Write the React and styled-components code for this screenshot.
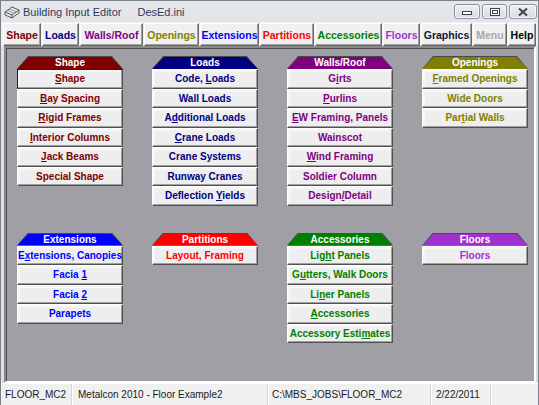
import React from 'react';
import styled, { createGlobalStyle } from 'styled-components';

const GlobalStyle = createGlobalStyle`
  html, body {
    margin: 0;
    padding: 0;
    background: #dfe2e6;
  }
`;

const Window = styled.div`
  width: 539px;
  height: 405px;
  box-sizing: border-box;
  display: flex;
  flex-direction: column;
  background: linear-gradient(#e4e7eb, #dcdfe4 60px);
  border: 1px solid #7d8289;
  border-bottom: none;
  overflow: hidden;
`;

const TitleBar = styled.div`
  height: 21px;
  display: flex;
  align-items: center;
  padding-left: 3px;
  font-family: "Liberation Sans", Arial, sans-serif;
  font-size: 11px;
  color: #2e3d5c;
`;

const TitleText = styled.span`
  margin-left: ${p => p.$gap || 0}px;
`;

const Controls = styled.div`
  margin-left: auto;
  margin-right: 1px;
  display: flex;
  gap: 2px;
  align-self: flex-start;
  margin-top: 3px;
`;

const CtrlButton = styled.div`
  width: ${p => p.$w}px;
  height: 15px;
  box-sizing: border-box;
  border: 1px solid #8e949c;
  border-radius: 3px;
  background: linear-gradient(#eef0f2, #d7dadf);
  box-shadow: inset 0 0 0 1px #f6f7f8;
  display: flex;
  align-items: center;
  justify-content: center;
`;

const TabRow = styled.div`
  height: 24px;
  display: flex;
  gap: 1px;
  padding: 1px 2px 0 2px;
  box-sizing: border-box;
  background: #f0f0f0;
`;

const Tab = styled.div`
  width: ${p => p.$w}px;
  height: 23px;
  box-sizing: border-box;
  border: 1px solid;
  border-color: #ffffff #696969 #696969 #ffffff;
  box-shadow: inset -1px -1px 0 #a0a0a0;
  background: #f0f0f0;
  color: ${p => p.$color};
  font-family: "Liberation Sans", Arial, sans-serif;
  font-weight: bold;
  font-size: 10.5px;
  display: flex;
  align-items: center;
  justify-content: center;
  white-space: nowrap;
`;

const Workspace = styled.div`
  flex: 1;
  margin: 0 2px 0 3px;
  background: #a09fa5;
  border: 2px solid;
  border-color: #8a8a8a #ffffff #ffffff #8a8a8a;
  box-shadow: inset 1px 1px 0 #505050;
  display: grid;
  grid-template-columns: repeat(4, 106px);
  column-gap: 29px;
  row-gap: 27px;
  align-content: start;
  align-items: start;
  padding: 8px 0 0 11px;
`;

const Group = styled.div`
  display: flex;
  flex-direction: column;
`;

const HeaderEdge = styled.div`
  height: 13px;
  padding-top: 1px;
  box-sizing: border-box;
  background: #4a4a4a;
  clip-path: polygon(11px 0, calc(100% - 11px) 0, 100% 100%, 0 100%);
`;

const HeaderFill = styled.div`
  height: 12px;
  background: ${p => p.$color};
  clip-path: polygon(12px 0, calc(100% - 12px) 0, 100% 100%, 0 100%);
  color: #ffffff;
  font-family: "Liberation Sans", Arial, sans-serif;
  font-weight: bold;
  font-size: 10px;
  line-height: 12px;
  text-align: center;
  white-space: nowrap;
`;

const ItemButton = styled.div`
  height: 19.5px;
  box-sizing: border-box;
  border: 1px solid;
  border-color: ${p => (p.$focus ? '#202020' : '#ffffff')} #505050 #505050 ${p => (p.$focus ? '#202020' : '#ffffff')};
  box-shadow: inset -1px -1px 0 #a0a0a0, inset 2px 2px 0 #f6f6f6;
  background: #eeeeee;
  color: ${p => p.$color};
  font-family: "Liberation Sans", Arial, sans-serif;
  font-weight: bold;
  font-size: 10px;
  display: flex;
  align-items: center;
  justify-content: center;
  white-space: nowrap;
`;

const Label = styled.span`
  white-space: pre;
`;

const StatusBar = styled.div`
  height: 21px;
  display: flex;
  background: #f0f0f0;
  border-top: 1px solid #ffffff;
  font-family: "Liberation Sans", Arial, sans-serif;
  font-size: 10px;
  color: #1a1a1a;
`;

const StatusCell = styled.div`
  width: ${p => p.$w}px;
  box-sizing: border-box;
  display: flex;
  align-items: center;
  padding-left: ${p => p.$pad}px;
  border-right: 1px solid #d5d5d5;
  box-shadow: 1px 0 0 #ffffff;
  margin-right: 2px;
  white-space: nowrap;
  &:last-child {
    border-right: none;
    box-shadow: none;
    margin-right: 0;
    flex: 1;
  }
`;

const COLORS = {
  shape: '#800000',
  loads: '#000080',
  walls: '#800080',
  openings: '#808000',
  ext: '#0000ff',
  part: '#ff0000',
  acc: '#008000',
  floors: '#a033cf',
};

const tabs = [
  { label: 'Shape', w: 38, color: COLORS.shape },
  { label: 'Loads', w: 37, color: COLORS.loads },
  { label: 'Walls/Roof', w: 63, color: COLORS.walls },
  { label: 'Openings', w: 55, color: COLORS.openings },
  { label: 'Extensions', w: 59, color: COLORS.ext },
  { label: 'Partitions', w: 54, color: COLORS.part },
  { label: 'Accessories', w: 67, color: COLORS.acc },
  { label: 'Floors', w: 37, color: COLORS.floors },
  { label: 'Graphics', w: 51, color: '#14143c' },
  { label: 'Menu', w: 34, color: '#a8a8a8' },
  { label: 'Help', w: 28, color: '#000000' },
];

// each item: [before, underlined, after]
const groups = [
  {
    title: 'Shape', color: COLORS.shape, items: [
      ['', 'S', 'hape'], ['', 'B', 'ay Spacing'], ['', 'R', 'igid Frames'],
      ['', 'I', 'nterior Columns'], ['', 'J', 'ack Beams'], ['Special Shape'],
    ],
  },
  {
    title: 'Loads', color: COLORS.loads, items: [
      ['Code, ', 'L', 'oads'], ['Wall Loads'], ['A', 'd', 'ditional Loads'],
      ['', 'C', 'rane Loads'], ['Crane Systems'], ['Runway Cranes'], ['Deflection ', 'Y', 'ields'],
    ],
  },
  {
    title: 'Walls/Roof', color: COLORS.walls, items: [
      ['G', 'i', 'rts'], ['', 'P', 'urlins'], ['', 'E', 'W Framing, Panels'], ['Wainscot'],
      ['', 'W', 'ind Framing'], ['Soldier Column'], ['Design', '/', 'Detail'],
    ],
  },
  {
    title: 'Openings', color: COLORS.openings, items: [
      ['', 'F', 'ramed Openings'], ['Wide Doors'], ['Par', 't', 'ial Walls'],
    ],
  },
  {
    title: 'Extensions', color: COLORS.ext, items: [
      ['E', 'x', 'tensions, Canopies'], ['Facia ', '1', ''], ['Facia ', '2', ''], ['Parapets'],
    ],
  },
  {
    title: 'Partitions', color: COLORS.part, items: [['Layout, Framing']],
  },
  {
    title: 'Accessories', color: COLORS.acc, items: [
      ['Lig', 'h', 't Panels'], ['G', 'u', 'tters, Walk Doors'], ['Li', 'n', 'er Panels'],
      ['', 'A', 'ccessories'], ['Accessory Esti', 'm', 'ates'],
    ],
  },
  {
    title: 'Floors', color: COLORS.floors, items: [['Floors']],
  },
];

function AppIcon() {
  return (
    <svg width="16" height="14" viewBox="0 0 16 14">
      <path d="M1 7 L8 2 L15 5 L15 8 L8 13 L1 10 Z" fill="#e8e8e8" stroke="#555" strokeWidth="1" />
      <path d="M1 7 L8 10 L15 5 M8 10 L8 13" fill="none" stroke="#555" strokeWidth="1" />
      <path d="M4 5.5 L10 8.2 M6 4 L12 6.6" stroke="#999" strokeWidth="1" />
    </svg>
  );
}

function App() {
  return (
    <>
      <GlobalStyle />
      <Window>
        <TitleBar>
          <AppIcon />
          <TitleText $gap={3}>Building Input Editor</TitleText>
          <TitleText $gap={16}>DesEd.ini</TitleText>
          <Controls>
            <CtrlButton $w={26}>
              <svg width="10" height="6" viewBox="0 0 10 6">
                <rect x="0.5" y="2.5" width="9" height="3" fill="#fff" stroke="#3c4450" />
              </svg>
            </CtrlButton>
            <CtrlButton $w={25}>
              <svg width="10" height="8" viewBox="0 0 10 8">
                <rect x="0.5" y="0.5" width="9" height="7" fill="#fff" stroke="#3c4450" />
                <rect x="2.5" y="2.5" width="5" height="3" fill="none" stroke="#3c4450" />
              </svg>
            </CtrlButton>
            <CtrlButton $w={28}>
              <svg width="10" height="8" viewBox="0 0 10 8">
                <path d="M1 0.5 L9 7.5 M9 0.5 L1 7.5" stroke="#3c4450" strokeWidth="2" />
              </svg>
            </CtrlButton>
          </Controls>
        </TitleBar>
        <TabRow>
          {tabs.map(t => (
            <Tab key={t.label} $w={t.w} $color={t.color}>{t.label}</Tab>
          ))}
        </TabRow>
        <Workspace>
          {groups.map(g => (
            <Group key={g.title}>
              <HeaderEdge>
                <HeaderFill $color={g.color}>{g.title}</HeaderFill>
              </HeaderEdge>
              {g.items.map((it, i) => (
                <ItemButton key={i} $color={g.color} $focus={g.title === 'Shape' && i === 0}>
                  <Label>
                    {it[0]}
                    {it[1] && <u>{it[1]}</u>}
                    {it[2]}
                  </Label>
                </ItemButton>
              ))}
            </Group>
          ))}
        </Workspace>
        <StatusBar>
          <StatusCell $w={71} $pad={4}>FLOOR_MC2</StatusCell>
          <StatusCell $w={194} $pad={4}>Metalcon 2010 - Floor Example2</StatusCell>
          <StatusCell $w={161} $pad={2}>C:\MBS_JOBS\FLOOR_MC2</StatusCell>
          <StatusCell $w={58} $pad={3}>2/22/2011</StatusCell>
          <StatusCell $w={48} $pad={0}></StatusCell>
        </StatusBar>
      </Window>
    </>
  );
}

export default App;
